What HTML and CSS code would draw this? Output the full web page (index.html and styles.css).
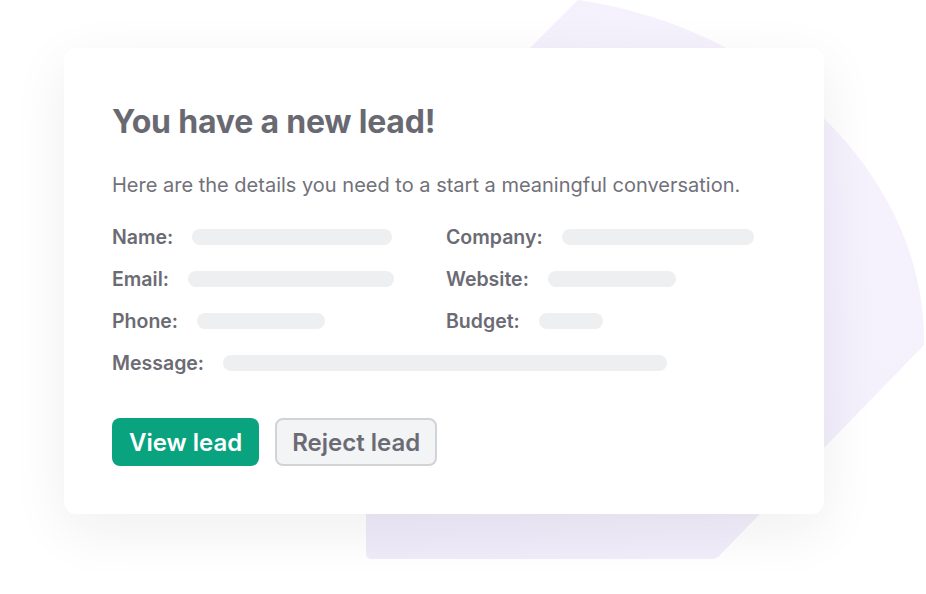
FILE: index.html
```html
<!DOCTYPE html>
<html>
<head>
  <meta name="viewport" content="width=device-width" />
  <link rel="stylesheet" href="styles.css">
  <title>New lead</title>
</head>
<body>
  <svg class="blob" width="926" height="594" viewBox="0 0 926 594">
    <defs>
      <linearGradient id="blobFill" x1="0" y1="1" x2="1" y2="0">
        <stop offset="0" stop-color="#efebf9" />
        <stop offset="1" stop-color="#f7f3fe" />
      </linearGradient>
    </defs>
    <path d="M366,212 L578,0 C780,30 924,180 924,340 L924,345 L719,556 Q716,559 711,559 L372,559 Q366,559 366,553 Z" fill="url(#blobFill)" />
  </svg>

  <div class="card">
    <h1 class="title">You have a new lead!</h1>
    <p class="intro">Here are the details you need to a start a meaningful conversation.</p>

    <div class="fields">
      <div class="field"><span class="label">Name:</span><span class="bar" style="width:200px"></span></div>
      <div class="field"><span class="label">Company:</span><span class="bar" style="width:192px"></span></div>
      <div class="field"><span class="label">Email:</span><span class="bar" style="width:206px"></span></div>
      <div class="field"><span class="label">Website:</span><span class="bar" style="width:128px"></span></div>
      <div class="field"><span class="label">Phone:</span><span class="bar" style="width:128px"></span></div>
      <div class="field"><span class="label">Budget:</span><span class="bar" style="width:64px"></span></div>
      <div class="field wide"><span class="label">Message:</span><span class="bar" style="width:444px"></span></div>
    </div>

    <div class="actions">
      <button class="btn btn-view" type="button">View lead</button>
      <button class="btn btn-reject" type="button">Reject lead</button>
    </div>
  </div>
</body>
</html>
```

FILE: styles.css
```css
html, body {
  margin: 0;
  padding: 0;
  background: #ffffff;
  overflow: hidden;
}
body {
  position: relative;
  width: 926px;
  height: 594px;
  font-family: "Inter", "Noto Sans", sans-serif;
  color: #6b6b74;
}

.blob {
  position: absolute;
  left: 0;
  top: 0;
  z-index: 0;
}

.card {
  position: relative;
  z-index: 1;
  box-sizing: border-box;
  width: 760px;
  height: 466px;
  margin: 48px 0 0 64px;
  padding: 54px 48px 0 48px;
  background: #ffffff;
  border-radius: 12px;
  box-shadow: 0 16px 56px rgba(30, 30, 50, 0.07);
}

.title {
  margin: 0;
  font-size: 32px;
  line-height: 40px;
  font-weight: 700;
  letter-spacing: -0.2px;
  color: #696972;
}

.intro {
  margin: 29px 0 0 0;
  font-size: 20px;
  line-height: 28px;
  color: #71717a;
}

.fields {
  display: grid;
  grid-template-columns: 334px auto;
  row-gap: 16px;
  margin-top: 25px;
}
.field {
  display: flex;
  align-items: center;
  gap: 19px;
  height: 26px;
}
.field.wide {
  grid-column: 1 / 3;
}
.label {
  font-size: 19.5px;
  font-weight: 600;
  color: #6b6b74;
}
.bar {
  display: block;
  height: 16px;
  border-radius: 8px;
  background: #eeeff0;
}

.actions {
  display: flex;
  gap: 16px;
  margin-top: 42px;
}
.btn {
  box-sizing: border-box;
  height: 48px;
  padding: 0 17px;
  border-radius: 8px;
  font-family: "Inter", "Noto Sans", sans-serif;
  font-size: 24px;
  font-weight: 600;
}
.btn-view {
  border: none;
  background: #0aa37f;
  color: #ffffff;
}
.btn-reject {
  padding: 0 15px;
  border: 2px solid #d2d3d6;
  background: #f3f4f6;
  color: #6b6b74;
}
```
